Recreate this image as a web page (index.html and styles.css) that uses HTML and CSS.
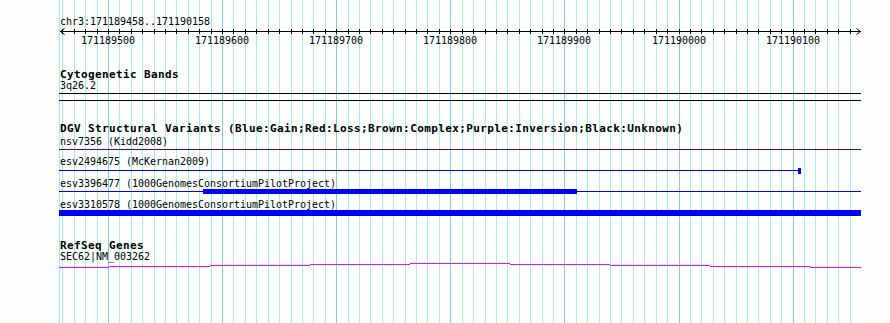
FILE: index.html
```html
<!DOCTYPE html>
<html lang="en">
<head>
<meta charset="utf-8">
<title>DGV region chr3:171189458..171190158</title>
<link rel="stylesheet" href="styles.css">
</head>
<body>
<div class="panel">
  <svg class="grid" width="890" height="323" viewBox="0 0 890 323" aria-hidden="true">
    <path class="grid-minor" d="M59.5 0V323M62.5 0V323M74.5 0V323M85.5 0V323M97.5 0V323M119.5 0V323M131.5 0V323M142.5 0V323M154.5 0V323M165.5 0V323M176.5 0V323M188.5 0V323M199.5 0V323M211.5 0V323M233.5 0V323M245.5 0V323M256.5 0V323M268.5 0V323M279.5 0V323M291.5 0V323M302.5 0V323M313.5 0V323M325.5 0V323M348.5 0V323M359.5 0V323M370.5 0V323M382.5 0V323M393.5 0V323M405.5 0V323M416.5 0V323M427.5 0V323M439.5 0V323M462.5 0V323M473.5 0V323M485.5 0V323M496.5 0V323M507.5 0V323M519.5 0V323M530.5 0V323M542.5 0V323M553.5 0V323M576.5 0V323M587.5 0V323M599.5 0V323M610.5 0V323M621.5 0V323M633.5 0V323M644.5 0V323M656.5 0V323M667.5 0V323M690.5 0V323M701.5 0V323M713.5 0V323M724.5 0V323M736.5 0V323M747.5 0V323M758.5 0V323M770.5 0V323M781.5 0V323M804.5 0V323M815.5 0V323M827.5 0V323M838.5 0V323M850.5 0V323"/>
    <path class="grid-major" d="M108.5 0V323M222.5 0V323M336.5 0V323M450.5 0V323M564.5 0V323M679.5 0V323M793.5 0V323"/>
  </svg>

  <div class="content">
    <section class="ruler">
      <div class="label">chr3:171189458..171190158</div>
      <svg class="glyph ruler-svg" width="890" height="20" viewBox="0 0 890 20">
        <path class="ink" d="M60 3.5H861"/>
        <path class="ink" d="M62.5 1V6M74.5 1V6M85.5 1V6M97.5 1V6M108.5 1V6M119.5 1V6M131.5 1V6M142.5 1V6M154.5 1V6M165.5 1V6M176.5 1V6M188.5 1V6M199.5 1V6M211.5 1V6M222.5 1V6M233.5 1V6M245.5 1V6M256.5 1V6M268.5 1V6M279.5 1V6M291.5 1V6M302.5 1V6M313.5 1V6M325.5 1V6M336.5 1V6M348.5 1V6M359.5 1V6M370.5 1V6M382.5 1V6M393.5 1V6M405.5 1V6M416.5 1V6M427.5 1V6M439.5 1V6M450.5 1V6M462.5 1V6M473.5 1V6M485.5 1V6M496.5 1V6M507.5 1V6M519.5 1V6M530.5 1V6M542.5 1V6M553.5 1V6M564.5 1V6M576.5 1V6M587.5 1V6M599.5 1V6M610.5 1V6M621.5 1V6M633.5 1V6M644.5 1V6M656.5 1V6M667.5 1V6M679.5 1V6M690.5 1V6M701.5 1V6M713.5 1V6M724.5 1V6M736.5 1V6M747.5 1V6M758.5 1V6M770.5 1V6M781.5 1V6M793.5 1V6M804.5 1V6M815.5 1V6M827.5 1V6M838.5 1V6M850.5 1V6"/>
        <polyline class="arrow" points="64.5,0.5 60.5,3.5 64.5,6.5"/>
        <polyline class="arrow" points="856.5,0.5 860.5,3.5 856.5,6.5"/>
        <g class="tick-labels">
          <text x="108" y="16">171189500</text>
          <text x="222" y="16">171189600</text>
          <text x="336" y="16">171189700</text>
          <text x="450" y="16">171189800</text>
          <text x="564" y="16">171189900</text>
          <text x="679" y="16">171190000</text>
          <text x="793" y="16">171190100</text>
        </g>
      </svg>
    </section>

    <section class="track cyto">
      <h2 class="track-title">Cytogenetic Bands</h2>
      <div class="label">3q26.2</div>
      <svg class="glyph band-svg" width="890" height="10" viewBox="0 0 890 10">
        <path class="ink" d="M59 1.5H861M59 8.5H861"/>
      </svg>
    </section>

    <section class="track dgv">
      <h2 class="track-title">DGV Structural Variants (Blue:Gain;Red:Loss;Brown:Complex;Purple:Inversion;Black:Unknown)</h2>
      <div class="feature f-nsv">
        <div class="label">nsv7356 (Kidd2008)</div>
        <svg class="glyph" width="890" height="3" viewBox="0 0 890 3">
          <path class="purple-line" d="M59 1.5H861"/>
        </svg>
      </div>
      <div class="feature f-esv1">
        <div class="label">esv2494675 (McKernan2009)</div>
        <svg class="glyph" width="890" height="8" viewBox="0 0 890 8">
          <path class="blue-line" d="M59 3.5H799"/>
          <rect class="blue-fill" x="798" y="1" width="3" height="6"/>
        </svg>
      </div>
      <div class="feature f-esv2">
        <div class="label">esv3396477 (1000GenomesConsortiumPilotProject)</div>
        <svg class="glyph" width="890" height="7" viewBox="0 0 890 7">
          <path class="blue-line" d="M59 3.5H861"/>
          <rect class="blue-fill" x="203" y="1" width="374" height="5"/>
        </svg>
      </div>
      <div class="feature f-esv3">
        <div class="label">esv3310578 (1000GenomesConsortiumPilotProject)</div>
        <svg class="glyph" width="890" height="8" viewBox="0 0 890 8">
          <rect class="blue-fill" x="59" y="1" width="802" height="6"/>
        </svg>
      </div>
    </section>

    <section class="track refseq">
      <h2 class="track-title">RefSeq Genes</h2>
      <div class="label">SEC62|NM_003262</div>
      <svg class="glyph" width="890" height="7" viewBox="0 0 890 7">
        <path class="magenta-line" d="M59 5.5H109M109 4.5H210M210 3.5H310M310 2.5H410M410 1.5H510M510 2.5H610M610 3.5H710M710 4.5H810M810 5.5H861"/>
      </svg>
    </section>
  </div>
</div>
</body>
</html>
```

FILE: styles.css
```css
* { box-sizing: border-box; }

html, body {
  margin: 0;
  padding: 0;
  background: #fcfffc;
}

.panel {
  position: relative;
  width: 890px;
  height: 323px;
  overflow: hidden;
  background: #fcfffc;
  font-family: "DejaVu Sans Mono", "Liberation Mono", monospace;
  color: #000;
}

.grid {
  position: absolute;
  left: 0;
  top: 0;
  display: block;
}

.grid-minor {
  stroke: #a8ecec;
  stroke-width: 1;
  fill: none;
  shape-rendering: crispEdges;
}

.grid-major {
  stroke: #82c8e8;
  stroke-width: 1;
  fill: none;
  shape-rendering: crispEdges;
}

.content {
  position: relative;
  display: flex;
  flex-direction: column;
}

.label {
  padding-left: 60px;
  height: 13px;
  line-height: 13px;
  font-size: 10px;
  letter-spacing: -0.02px;
  white-space: nowrap;
}

.track-title {
  margin: 0;
  padding-left: 60px;
  height: 13px;
  line-height: 13px;
  font-size: 11px;
  font-weight: bold;
  letter-spacing: 0.38px;
  white-space: nowrap;
}

.glyph {
  display: block;
  overflow: visible;
}

.ink {
  stroke: #000;
  stroke-width: 1;
  fill: none;
  shape-rendering: crispEdges;
}

.arrow {
  stroke: #000;
  stroke-width: 1;
  fill: none;
}

.tick-labels text {
  font-family: "DejaVu Sans Mono", "Liberation Mono", monospace;
  font-size: 10px;
  letter-spacing: -0.02px;
  text-anchor: middle;
  fill: #000;
}

/* vertical rhythm */
.ruler { margin-top: 15px; }
.ruler .ruler-svg { margin-top: 0; }

.cyto { margin-top: 20px; }
.cyto .label { margin-top: -2px; }

.dgv { margin-top: 20px; }

.f-esv1 { margin-top: 4px; }
.f-esv1 .glyph { margin-top: -1px; }
.f-esv2 { margin-top: 2px; }
.f-esv2 .glyph { margin-top: -2px; }
.f-esv3 { margin-top: 3px; }
.f-esv3 .glyph { margin-top: -2px; }

.refseq { margin-top: 22px; }
.refseq .label { margin-top: -2px; }
.refseq .glyph { margin-top: -1px; }

.purple-line {
  stroke: #55009a;
  stroke-width: 1;
  fill: none;
  shape-rendering: crispEdges;
}

.blue-line {
  stroke: #0000ff;
  stroke-width: 1;
  fill: none;
  shape-rendering: crispEdges;
}

.blue-fill {
  fill: #0000ff;
  shape-rendering: crispEdges;
}

.magenta-line {
  stroke: #ff00ff;
  stroke-width: 1;
  fill: none;
  shape-rendering: crispEdges;
}
```
